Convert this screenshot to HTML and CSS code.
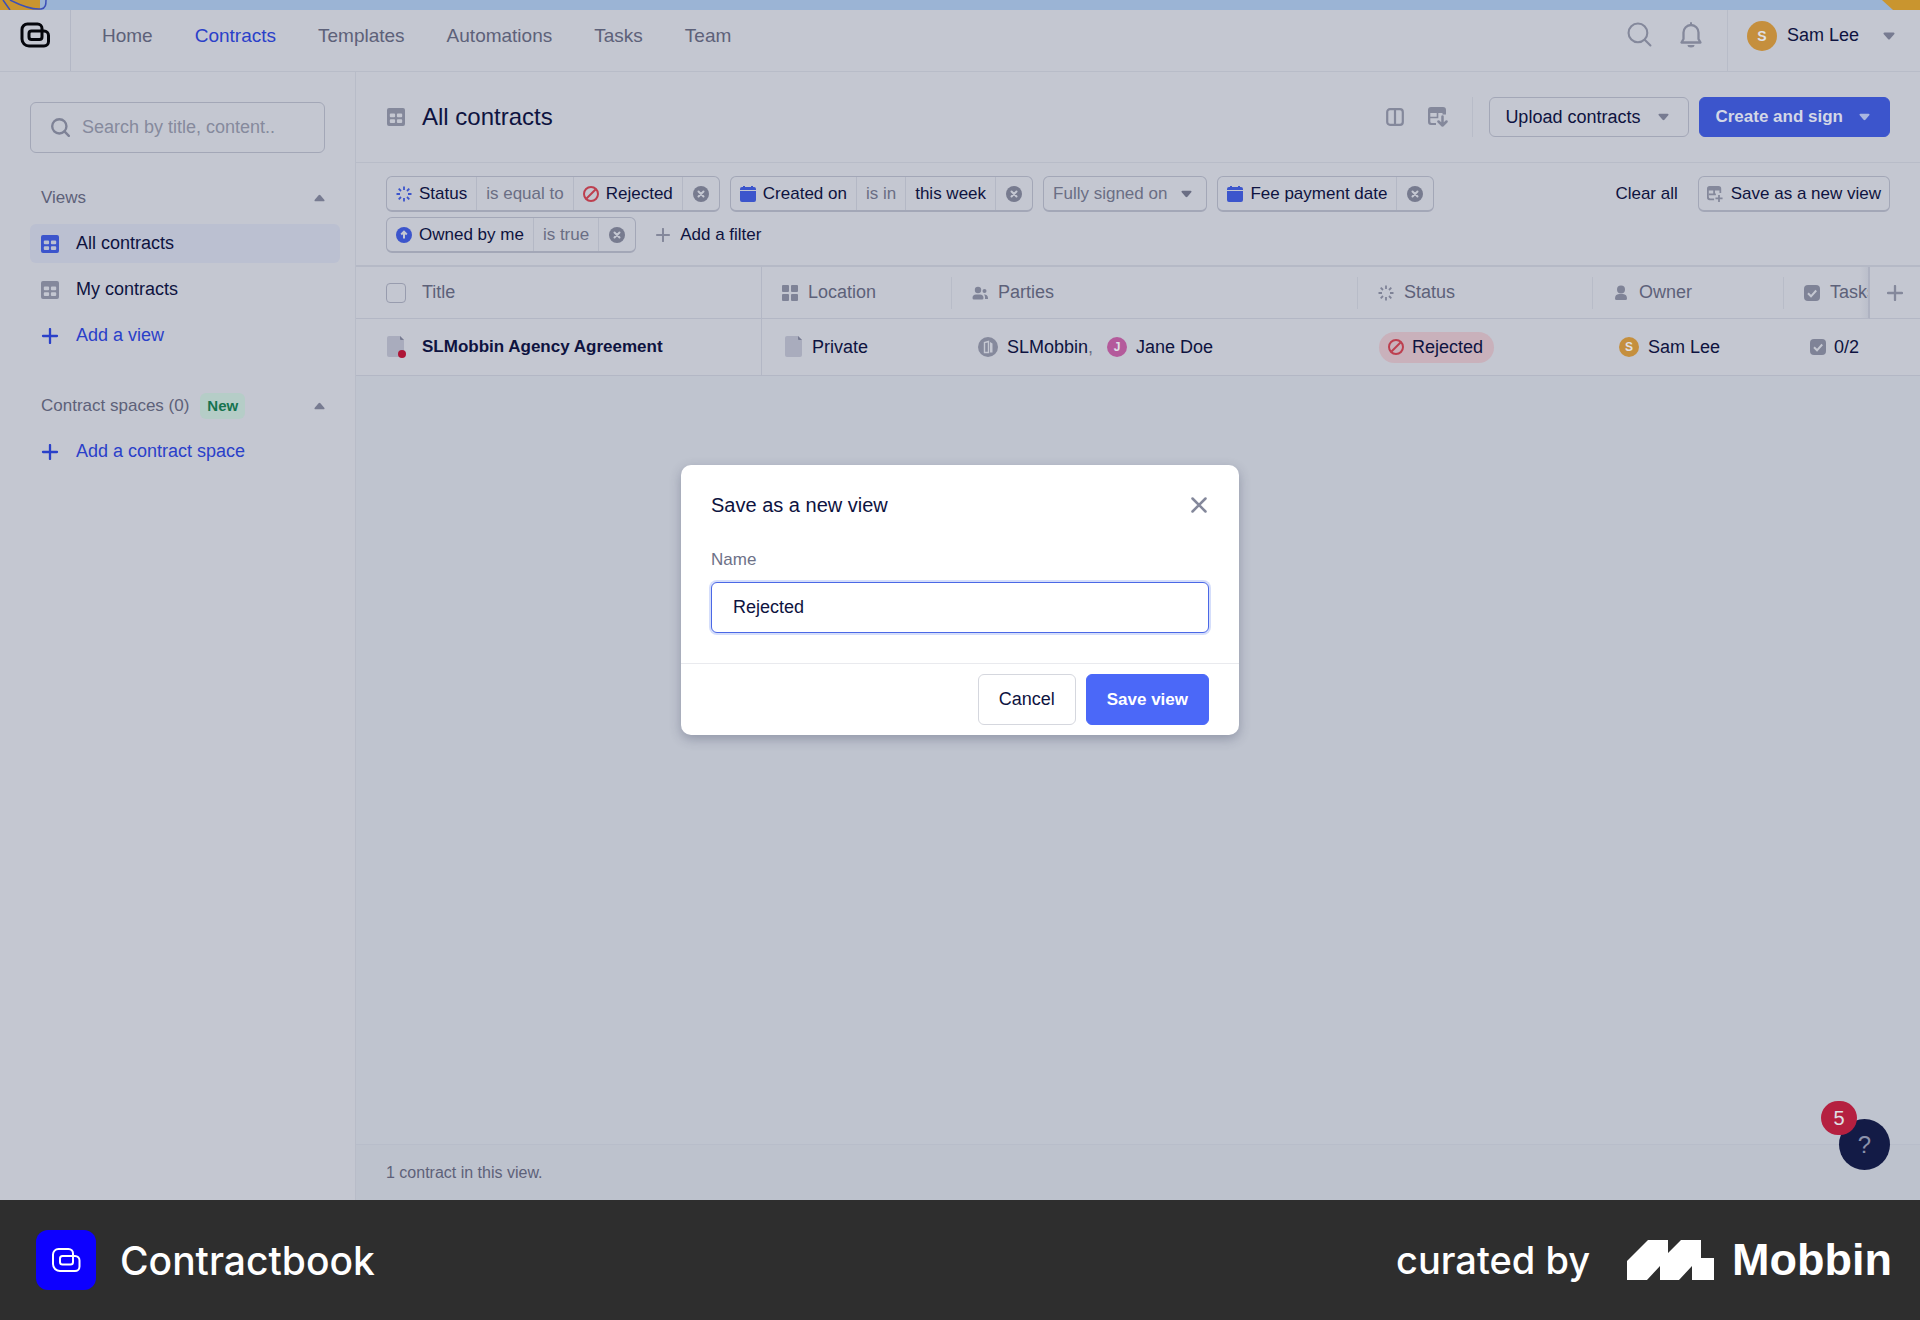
FILE: index.html
```
<!DOCTYPE html>
<html lang="en">
<head>
    <meta charset="UTF-8">
    <meta name="viewport" content="width=device-width, initial-scale=1.0">
    <title>All contracts - Contractbook</title>
    <link rel="stylesheet" href="styles.css">
</head>
<body>
    <!-- icon set -->
    <svg class="sprite" aria-hidden="true">
        <symbol id="logo" viewBox="0 0 30 26">
            <path d="M7.500 2h10A4.500 4.500 0 0 1 22 6.500V15a2.500 2.500 0 0 1-2.500 2.500h-8A2.500 2.500 0 0 1 9 15v-3.500A2.500 2.500 0 0 1 11.500 9H24a4.500 4.500 0 0 1 4.500 4.500v6A4.500 4.500 0 0 1 24 24H9a7 7 0 0 1-7-7V7.500A5.500 5.500 0 0 1 7.500 2z" fill="none"/>
        </symbol>
        <symbol id="search" viewBox="0 0 24 24">
            <g fill="none" stroke="currentColor">
                <circle cx="10.500" cy="10.500" r="9"/>
                <path d="M17 17l5.500 5.500" stroke-linecap="round"/>
            </g>
        </symbol>
        <symbol id="bell" viewBox="0 0 22 26">
            <path d="M1.500 20.500h19L18.500 17v-6.500a7.500 7.500 0 0 0-15 0V17z" fill="none" stroke="currentColor" stroke-width="2.300" stroke-linejoin="round"/>
            <path d="M11 1v2" stroke="currentColor" stroke-width="2" stroke-linecap="round"/>
            <path d="M7.500 23h7a3.500 2.500 0 0 1-7 0z" fill="currentColor"/>
        </symbol>
        <symbol id="down" viewBox="0 0 12 8">
            <path d="M1.500 .500h9a1 1 0 0 1 .7 1.700L7 7a1.400 1.400 0 0 1-2 0L.8 2.200A1 1 0 0 1 1.500 .500z" fill="currentColor"/>
        </symbol>
        <symbol id="up" viewBox="0 0 12 8">
            <path d="M1.500 7.500h9a1 1 0 0 0 .7-1.700L7 1a1.400 1.400 0 0 0-2 0L.8 5.800A1 1 0 0 0 1.500 7.500z" fill="currentColor"/>
        </symbol>
        <symbol id="grid" viewBox="0 0 18 18">
            <path fill-rule="evenodd" fill="currentColor" d="M2 0h14a2 2 0 0 1 2 2v14a2 2 0 0 1-2 2H2a2 2 0 0 1-2-2V2a2 2 0 0 1 2-2zM3.800 5.500a1 1 0 0 0-1 1v1.800a1 1 0 0 0 1 1h3.300a1 1 0 0 0 1-1V6.500a1 1 0 0 0-1-1zM10.900 5.500a1 1 0 0 0-1 1v1.800a1 1 0 0 0 1 1h3.300a1 1 0 0 0 1-1V6.500a1 1 0 0 0-1-1zM3.800 11.200a1 1 0 0 0-1 1V14a1 1 0 0 0 1 1h3.300a1 1 0 0 0 1-1v-1.800a1 1 0 0 0-1-1zM10.900 11.200a1 1 0 0 0-1 1V14a1 1 0 0 0 1 1h3.300a1 1 0 0 0 1-1v-1.800a1 1 0 0 0-1-1z"/>
        </symbol>
        <symbol id="plus" viewBox="0 0 16 16">
            <path d="M8 1v14M1 8h14" stroke="currentColor" stroke-width="2.300" stroke-linecap="round"/>
        </symbol>
        <symbol id="columns" viewBox="0 0 18 18">
            <path d="M4 1.200h10a2.800 2.800 0 0 1 2.800 2.800v10a2.800 2.800 0 0 1-2.800 2.800H4A2.800 2.800 0 0 1 1.200 14V4A2.800 2.800 0 0 1 4 1.200zM9 1v16" fill="none" stroke="currentColor" stroke-width="2.200"/>
        </symbol>
        <symbol id="grid-down" viewBox="0 0 20 20">
            <path d="M3 0h12a3 3 0 0 1 3 3v4.500h-3.500V6H2.300v8.500A1.500 1.500 0 0 0 3.800 16H8v2H3a3 3 0 0 1-3-3V3a3 3 0 0 1 3-3z" fill="currentColor"/>
            <path d="M9.500 5v5.500H2" fill="none" stroke="currentColor" stroke-width="1.600"/>
            <path d="M14.500 9.500v9M10.500 14.500l4 4 4-4" fill="none" stroke="currentColor" stroke-width="2.500" stroke-linecap="round" stroke-linejoin="round"/>
        </symbol>
        <symbol id="grid-plus" viewBox="0 0 18 18">
            <path d="M3 0h10a3 3 0 0 1 3 3v5h-2V5H2v7.500A1.500 1.500 0 0 0 3.500 14H8v2H3a3 3 0 0 1-3-3V3a3 3 0 0 1 3-3z" fill="currentColor"/>
            <path d="M8 4v6M2 9.500h8M13.500 10v8M9.500 14h8" fill="none" stroke="currentColor" stroke-width="2"/>
        </symbol>
        <symbol id="spinner" viewBox="0 0 16 16">
            <path d="M8 .500v3.500M8 12v3.500M.500 8H4M12 8h3.500M2.700 2.700l2.300 2.300M11 11l2.300 2.300M13.300 2.700L11 5M5 11l-2.300 2.300" stroke="currentColor" stroke-width="1.800"/>
        </symbol>
        <symbol id="ban" viewBox="0 0 16 16">
            <circle cx="8" cy="8" r="7" fill="none" stroke="currentColor" stroke-width="2"/>
            <path d="M3.500 12.500l9-9" stroke="currentColor" stroke-width="2"/>
        </symbol>
        <symbol id="clear" viewBox="0 0 16 16">
            <circle cx="8" cy="8" r="8" fill="currentColor"/>
            <path d="M5.500 5.500l5 5M10.500 5.500l-5 5" stroke="#c5c8d2" stroke-width="2" stroke-linecap="round"/>
        </symbol>
        <symbol id="calendar" viewBox="0 0 16 16">
            <path d="M3 0h2v1h6V0h2v1h1a2 2 0 0 1 2 2v1H0V3a2 2 0 0 1 2-2h1zM0 5h16v9a2 2 0 0 1-2 2H2a2 2 0 0 1-2-2z" fill="currentColor"/>
        </symbol>
        <symbol id="owned" viewBox="0 0 16 16">
            <circle cx="8" cy="8" r="8" fill="currentColor"/>
            <path d="M8 11.500V5M5.200 7.500L8 4.700l2.800 2.800" fill="none" stroke="#c5c8d2" stroke-width="2"/>
        </symbol>
        <symbol id="tiles" viewBox="0 0 16 16">
            <path d="M1 0h5a1 1 0 0 1 1 1v5a1 1 0 0 1-1 1H1a1 1 0 0 1-1-1V1a1 1 0 0 1 1-1zM10 0h5a1 1 0 0 1 1 1v5a1 1 0 0 1-1 1h-5a1 1 0 0 1-1-1V1a1 1 0 0 1 1-1zM1 9h5a1 1 0 0 1 1 1v5a1 1 0 0 1-1 1H1a1 1 0 0 1-1-1v-5a1 1 0 0 1 1-1zM10 9h5a1 1 0 0 1 1 1v5a1 1 0 0 1-1 1h-5a1 1 0 0 1-1-1v-5a1 1 0 0 1 1-1z" fill="currentColor"/>
        </symbol>
        <symbol id="people" viewBox="0 0 16 16">
            <g fill="currentColor">
                <circle cx="6" cy="5" r="3.200"/>
                <path d="M2 14.500a1.500 1.500 0 0 1-1.500-1.500A3.500 3.500 0 0 1 4 9.500h4a3.500 3.500 0 0 1 3.500 3.500 1.500 1.500 0 0 1-1.500 1.500z"/>
                <circle cx="12.500" cy="6" r="2"/>
                <path d="M12 9.500a3.500 3.500 0 0 1 4 3.500v1h-3v-1.500a4 4 0 0 0-1-3z"/>
            </g>
        </symbol>
        <symbol id="person" viewBox="0 0 16 16">
            <g fill="currentColor">
                <circle cx="8" cy="4.500" r="4"/>
                <path d="M3.500 15A1.500 1.500 0 0 1 2 13.500 4.500 4.500 0 0 1 6 9h4a4.500 4.500 0 0 1 4 4.500 1.500 1.500 0 0 1-1.500 1.500z"/>
            </g>
        </symbol>
        <symbol id="check" viewBox="0 0 16 16">
            <rect width="16" height="16" rx="4" fill="currentColor"/>
            <path d="M4 8.300l3 3 5.200-5.800" fill="none" stroke="#c5c8d2" stroke-width="2"/>
        </symbol>
        <symbol id="file" viewBox="0 0 18 22">
            <path d="M2 0h11l4 4v15a2 2 0 0 1-2 2H2a2 2 0 0 1-2-2V2a2 2 0 0 1 2-2z" fill="#a9acbd"/>
            <path d="M13 0l4 4h-3a1 1 0 0 1-1-1z" fill="#777b91"/>
        </symbol>
        <symbol id="company" viewBox="0 0 20 20">
            <circle cx="10" cy="10" r="10" fill="#85899c"/>
            <path d="M6.500 15.500V5.500L10.500 4.500v11z" fill="none" stroke="#c5c8d2" stroke-width="1.400"/>
            <path d="M12 5l2.500 1.500v9H12z" fill="#c5c8d2"/>
        </symbol>
        <symbol id="close" viewBox="0 0 16 16">
            <path d="M1.500 1.500l13 13M14.500 1.500l-13 13" stroke="currentColor" stroke-width="2.500" stroke-linecap="round"/>
        </symbol>
    </svg>

    <div class="app">
        <div class="banner">
            <svg width="48" height="10" viewBox="0 0 48 10">
                <path d="M0 0h40v10H0z" fill="#c9952f"/>
                <path d="M3 0l7 10M10 0c10 5 22 10 31 9 5-1 5-5 5-9" fill="none" stroke="#3c50b8" stroke-width="1.500"/>
            </svg>
            <svg width="38" height="10" viewBox="0 0 38 10">
                <path d="M0 0h38v10H11z" fill="#c9952f"/>
            </svg>
        </div>

        <header class="topbar">
            <a class="brand" href="#" aria-label="Contractbook">
                <svg width="30" height="26"><use href="#logo"/></svg>
            </a>
            <nav class="nav">
                <a href="#">Home</a>
                <a href="#" class="active">Contracts</a>
                <a href="#">Templates</a>
                <a href="#">Automations</a>
                <a href="#">Tasks</a>
                <a href="#">Team</a>
            </nav>
            <div class="tools">
                <button class="icon-btn" aria-label="Search"><svg width="25" height="25"><use href="#search"/></svg></button>
                <button class="icon-btn" aria-label="Notifications"><svg width="22" height="26"><use href="#bell"/></svg></button>
            </div>
            <button class="account">
                <span class="avatar large">S</span>
                <span class="account-name">Sam Lee</span>
                <svg width="12" height="8"><use href="#down"/></svg>
            </button>
        </header>

        <div class="layout">
            <aside class="sidebar">
                <div class="search">
                    <svg width="19" height="19"><use href="#search"/></svg>
                    <input type="text" placeholder="Search by title, content.." aria-label="Search contracts">
                </div>

                <section class="group">
                    <h2 class="group-title">Views <svg width="11" height="8"><use href="#up"/></svg></h2>
                    <a href="#" class="side-link current"><svg width="18" height="18"><use href="#grid"/></svg>All contracts</a>
                    <a href="#" class="side-link"><svg width="18" height="18"><use href="#grid"/></svg>My contracts</a>
                    <a href="#" class="side-link add"><svg width="16" height="16"><use href="#plus"/></svg>Add a view</a>
                </section>

                <section class="group">
                    <h2 class="group-title">Contract spaces (0) <span class="new">New</span> <svg width="11" height="8"><use href="#up"/></svg></h2>
                    <a href="#" class="side-link add"><svg width="16" height="16"><use href="#plus"/></svg>Add a contract space</a>
                </section>
            </aside>

            <main class="main">
                <div class="page-head">
                    <svg class="muted-icon" width="18" height="18"><use href="#grid"/></svg>
                    <h1>All contracts</h1>
                    <button class="icon-btn" aria-label="Columns"><svg width="18" height="18"><use href="#columns"/></svg></button>
                    <button class="icon-btn" aria-label="Export"><svg width="20" height="20"><use href="#grid-down"/></svg></button>
                    <div class="head-actions">
                        <button class="btn">Upload contracts <svg width="11" height="8"><use href="#down"/></svg></button>
                        <button class="btn primary">Create and sign <svg width="11" height="8"><use href="#down"/></svg></button>
                    </div>
                </div>

                <div class="filters">
                    <div class="chips">
                        <div class="chip">
                            <span class="blue"><svg width="16" height="16"><use href="#spinner"/></svg><b>Status</b></span>
                            <span>is equal to</span>
                            <span class="red"><svg width="16" height="16"><use href="#ban"/></svg><b>Rejected</b></span>
                            <button aria-label="Remove"><svg width="16" height="16"><use href="#clear"/></svg></button>
                        </div>
                        <div class="chip">
                            <span class="blue"><svg width="16" height="16"><use href="#calendar"/></svg><b>Created on</b></span>
                            <span>is in</span>
                            <span><b>this week</b></span>
                            <button aria-label="Remove"><svg width="16" height="16"><use href="#clear"/></svg></button>
                        </div>
                        <button class="chip picker">Fully signed on <svg width="11" height="8"><use href="#down"/></svg></button>
                        <div class="chip">
                            <span class="blue"><svg width="16" height="16"><use href="#calendar"/></svg><b>Fee payment date</b></span>
                            <button aria-label="Remove"><svg width="16" height="16"><use href="#clear"/></svg></button>
                        </div>
                        <div class="chip">
                            <span class="blue"><svg width="16" height="16"><use href="#owned"/></svg><b>Owned by me</b></span>
                            <span>is true</span>
                            <button aria-label="Remove"><svg width="16" height="16"><use href="#clear"/></svg></button>
                        </div>
                        <button class="add-filter"><svg width="14" height="14"><use href="#plus"/></svg>Add a filter</button>
                    </div>
                    <div class="filter-actions">
                        <button class="clear-all">Clear all</button>
                        <button class="chip save-view"><svg width="16" height="16"><use href="#grid-plus"/></svg>Save as a new view</button>
                    </div>
                </div>

                <table class="contracts">
                    <colgroup>
                        <col>
                        <col class="w-location">
                        <col class="w-parties">
                        <col class="w-status">
                        <col class="w-owner">
                        <col class="w-tasks">
                        <col class="w-more">
                    </colgroup>
                    <thead>
                        <tr>
                            <th><div class="cell first"><input type="checkbox" aria-label="Select all">Title</div></th>
                            <th><div class="cell line"><svg width="16" height="16"><use href="#tiles"/></svg>Location</div></th>
                            <th><div class="cell line"><svg width="16" height="16"><use href="#people"/></svg>Parties</div></th>
                            <th><div class="cell line"><svg width="16" height="16"><use href="#spinner"/></svg>Status</div></th>
                            <th><div class="cell line"><svg width="16" height="16"><use href="#person"/></svg>Owner</div></th>
                            <th class="tasks"><div class="cell"><svg width="16" height="16"><use href="#check"/></svg>Tasks</div></th>
                            <th class="more"><button class="icon-btn" aria-label="Add column"><svg width="16" height="16"><use href="#plus"/></svg></button></th>
                        </tr>
                    </thead>
                    <tbody>
                        <tr>
                            <td><div class="cell first"><span class="doc"><svg width="18" height="22"><use href="#file"/></svg></span><strong>SLMobbin Agency Agreement</strong></div></td>
                            <td><div class="cell place"><svg width="18" height="22"><use href="#file"/></svg>Private</div></td>
                            <td><div class="cell"><svg width="20" height="20"><use href="#company"/></svg><span>SLMobbin<i>,</i></span><span class="avatar pink">J</span>Jane Doe</div></td>
                            <td><div class="cell status"><span class="pill"><svg width="16" height="16"><use href="#ban"/></svg>Rejected</span></div></td>
                            <td><div class="cell"><span class="avatar">S</span>Sam Lee</div></td>
                            <td colspan="2"><div class="cell count"><svg width="16" height="16"><use href="#check"/></svg>0/2</div></td>
                        </tr>
                    </tbody>
                </table>

                <div class="summary">1 contract in this view.</div>
            </main>
        </div>

        <button class="help" aria-label="Help">?<span class="badge">5</span></button>

        <div class="overlay">
            <form class="modal">
                <div class="modal-body">
                    <div class="modal-head">
                        <h2>Save as a new view</h2>
                        <button type="button" class="icon-btn" aria-label="Close"><svg width="16" height="16"><use href="#close"/></svg></button>
                    </div>
                    <label for="view-name">Name</label>
                    <input type="text" id="view-name" value="Rejected">
                </div>
                <div class="modal-foot">
                    <button type="button" class="modal-btn">Cancel</button>
                    <button type="button" class="modal-btn save">Save view</button>
                </div>
            </form>
        </div>
    </div>

    <footer class="credits">
        <span class="tile"><svg width="30" height="26"><use href="#logo"/></svg></span>
        <span class="product">Contractbook</span>
        <span class="curated">curated by</span>
        <svg width="87" height="40" viewBox="0 0 87 40">
            <path d="M0 40V21L21 0h20v13L54 0h20v18h13v22H65V26L52 40H33V26L20 40z" fill="#fff"/>
        </svg>
        <span class="mobbin">Mobbin</span>
    </footer>
</body>
</html>
```
FILE: styles.css
```
* {
    box-sizing: border-box;
}
body {
    margin: 0;
    min-height: 100vh;
    display: flex;
    flex-direction: column;
    font-family: "Liberation Sans", Arial, sans-serif;
    font-size: 18px;
    color: #0e1340;
    background: #2e2e2e;
}
button, input {
    font: inherit;
    color: inherit;
}
button {
    padding: 0;
    border: none;
    background: none;
    cursor: pointer;
    white-space: nowrap;
}
a {
    color: inherit;
    text-decoration: none;
}
h1, h2 {
    margin: 0;
    font-weight: 400;
}
svg {
    display: block;
    flex: none;
}
.sprite {
    position: absolute;
    width: 0;
    height: 0;
}
.app {
    position: relative;
    flex: 1;
    display: flex;
    flex-direction: column;
    background: #c4c7d1;
}
.icon-btn {
    display: flex;
    color: #84889b;
}

/* top */
.banner {
    height: 10px;
    display: flex;
    justify-content: space-between;
    background: #9bb4d5;
}
.topbar {
    height: 62px;
    display: flex;
    border-bottom: 1px solid #b8bcc8;
}
.brand {
    width: 71px;
    padding: 12px 0 0 20px;
    border-right: 1px solid #b3b7c5;
}
.brand svg {
    stroke: #05060c;
    stroke-width: 3;
}
.nav {
    flex: 1;
    display: flex;
    gap: 42px;
    padding-left: 31px;
    font-size: 19px;
    line-height: 52px;
    color: #5d6179;
}
.nav .active {
    color: #2a40c9;
}
.tools {
    display: flex;
    gap: 28px;
    padding: 12px 25px 0 0;
    stroke-width: 2;
}
.account {
    display: flex;
    align-items: center;
    padding: 0 25px 10px 19px;
    border-left: 1px solid #b8bcc8;
    color: #777b91;
}
.account-name {
    margin: 0 24px 0 10px;
    color: #0e1340;
}
.avatar {
    width: 20px;
    height: 20px;
    border-radius: 50%;
    background: #c58f3d;
    color: #dfe0e6;
    font-size: 12px;
    font-weight: 700;
    line-height: 20px;
    text-align: center;
}
.avatar.large {
    width: 30px;
    height: 30px;
    font-size: 14px;
    line-height: 30px;
}
.avatar.pink {
    margin-left: 5px;
    background: #b45a9b;
}

.layout {
    flex: 1;
    display: flex;
}

/* sidebar */
.sidebar {
    width: 356px;
    padding: 30px 15px 0 30px;
    border-right: 1px solid #b8bcc8;
}
.search {
    display: flex;
    align-items: center;
    gap: 12px;
    height: 51px;
    margin-right: 15px;
    padding: 0 20px;
    border: 1px solid #a3a7b7;
    border-radius: 6px;
    color: #7e8296;
    stroke-width: 3;
}
.search input {
    flex: 1;
    min-width: 0;
    padding: 0;
    border: none;
    outline: none;
    background: none;
}
.search input::placeholder {
    color: #868a9d;
    opacity: 1;
}
.group {
    display: flex;
    flex-direction: column;
    gap: 7px;
    margin-top: 25px;
}
.group + .group {
    margin-top: 31px;
}
.group-title {
    display: flex;
    align-items: center;
    height: 39px;
    padding: 0 15px 0 11px;
    font-size: 17px;
    color: #5d6179;
}
.group-title svg {
    margin-left: auto;
    color: #777b91;
}
.new {
    margin-left: 11px;
    padding: 0 7px;
    border-radius: 6px;
    background: #b5cdc7;
    color: #16734f;
    font-size: 15px;
    font-weight: 700;
    line-height: 26px;
}
.side-link {
    display: flex;
    align-items: center;
    gap: 17px;
    height: 39px;
    padding-left: 11px;
    border-radius: 6px;
}
.side-link svg {
    width: 18px;
    color: #84889b;
}
.side-link.current {
    background: #bbc0d1;
}
.side-link.current svg {
    color: #3c55cc;
}
.side-link.add, .side-link.add svg {
    color: #2a40c9;
}

/* page */
.main {
    flex: 1;
    min-width: 0;
    display: flex;
    flex-direction: column;
    background: #bfc4cf;
}
.page-head {
    display: flex;
    align-items: center;
    gap: 24px;
    height: 91px;
    padding-right: 30px;
    padding-left: 31px;
    border-bottom: 1px solid #b8bcc8;
    background: #c4c7d1;
}
.page-head h1 {
    flex: 1;
    margin-left: -7px;
    font-size: 24px;
}
.muted-icon {
    color: #84889b;
}
.head-actions {
    display: flex;
    gap: 10px;
    padding-left: 16px;
    border-left: 1px solid #b8bcc8;
}
.btn {
    display: flex;
    align-items: center;
    gap: 18px;
    height: 40px;
    padding: 0 19px 0 15px;
    border: 1px solid #a3a7b7;
    border-radius: 6px;
}
.btn svg {
    color: #777b91;
}
.btn.primary {
    gap: 16px;
    border-color: #3c55cc;
    background: #3c55cc;
    color: #d3d7e6;
    font-size: 17px;
    font-weight: 700;
}
.btn.primary svg {
    color: #a9b6e0;
}
.filters {
    display: flex;
    gap: 20px;
    padding: 13px 30px 12px;
    border-bottom: 2px solid #b5b9c6;
    background: #c4c7d1;
    font-size: 17px;
}
.chips {
    flex: 1;
    display: flex;
    flex-wrap: wrap;
    gap: 5px 10px;
}
.chip {
    display: flex;
    height: 36px;
    border: 1px solid #a3a7b7;
    border-bottom-width: 2px;
    border-radius: 6px;
    color: #6a6e84;
}
.chip span, .chip button {
    display: flex;
    align-items: center;
    gap: 7px;
    padding: 0 9px;
    border-left: 1px solid #b4b8c5;
}
.chip > :first-child {
    border-left: none;
}
.chip b {
    font-weight: 400;
    color: #0e1340;
}
.chip button {
    padding: 0 10px;
    color: #777b8f;
}
.chip .blue {
    color: #3c55cc;
}
.red svg {
    color: #bd3f4f;
}
.picker {
    align-items: center;
    gap: 14px;
    padding: 0 14px 0 9px;
}
.add-filter {
    display: flex;
    align-items: center;
    gap: 10px;
    padding: 0 10px;
}
.add-filter svg {
    color: #84889b;
}
.filter-actions {
    display: flex;
    align-items: flex-start;
    gap: 20px;
}
.clear-all {
    height: 36px;
}
.save-view {
    align-items: center;
    gap: 8px;
    padding: 0 8px;
    color: #0e1340;
}
.save-view svg {
    color: #84889b;
}

/* table */
.contracts {
    width: 100%;
    table-layout: fixed;
    border-collapse: separate;
    border-spacing: 0;
    background: #c4c7d1;
}
.w-location { width: 190px; }
.w-parties { width: 406px; }
.w-status { width: 235px; }
.w-owner { width: 191px; }
.w-tasks { width: 86px; }
.w-more { width: 50px; }
th, td {
    padding: 0;
    border-bottom: 1px solid #b3b7c5;
    font-weight: 400;
    text-align: left;
    white-space: nowrap;
}
th {
    height: 52px;
    color: #5d6179;
}
td {
    height: 57px;
}
th:first-child, td:first-child {
    border-right: 1px solid #b3b7c5;
}
.cell {
    display: flex;
    align-items: center;
    gap: 10px;
    height: 32px;
    padding-left: 20px;
}
th .cell svg {
    color: #7f8397;
}
td .cell {
    gap: 9px;
    padding-left: 26px;
}
td .cell.first, th .cell.first {
    gap: 17px;
    padding-left: 31px;
}
.cell.line {
    border-right: 1px solid #b8bcc8;
}
td .cell.place {
    padding-left: 23px;
}
td .cell.status {
    padding-left: 21px;
}
.cell input {
    appearance: none;
    width: 20px;
    height: 20px;
    margin: 0 -1px 0 -1px;
    border: 1px solid #989cae;
    border-radius: 4px;
}
.cell i {
    font-style: normal;
    color: #6a6e84;
}
.cell strong {
    font-size: 17px;
}
td .cell.count {
    gap: 8px;
}
.cell.count svg {
    color: #7f8397;
}
.doc {
    position: relative;
}
.doc::after {
    content: "";
    position: absolute;
    right: -1px;
    bottom: 0;
    width: 8px;
    height: 8px;
    border-radius: 50%;
    background: #ae1637;
}
.pill {
    display: flex;
    align-items: center;
    gap: 8px;
    height: 31px;
    padding: 0 11px 0 9px;
    border-radius: 16px;
    background: #c9b1bb;
}
.pill svg {
    color: #bd3f4f;
}
.tasks {
    overflow: hidden;
    border-right: 2px solid #aeb2c1;
    background: linear-gradient(to left, #bbbfcb, #c4c7d1 8px);
}
.more .icon-btn {
    margin: auto;
}
.summary {
    margin-top: auto;
    height: 56px;
    padding-left: 30px;
    border-top: 1px solid #b8bdca;
    background: #bdc2cd;
    color: #5d6179;
    font-size: 16px;
    line-height: 56px;
}

.help {
    position: absolute;
    right: 30px;
    bottom: 30px;
    width: 51px;
    height: 51px;
    border-radius: 50%;
    background: #131b46;
    color: #8c92ab;
    font-size: 24px;
}
.badge {
    position: absolute;
    left: -18px;
    top: -18px;
    width: 36px;
    height: 34px;
    border-radius: 17px;
    background: #b52040;
    color: #dfe0e6;
    font-size: 20px;
    line-height: 34px;
}

/* dialog */
.overlay {
    position: absolute;
    inset: 0;
    display: flex;
    align-items: center;
    justify-content: center;
}
.modal {
    width: 558px;
    border-radius: 10px;
    background: #fff;
    box-shadow: 0 4px 12px rgba(40, 45, 80, 0.3);
}
.modal-body {
    display: flex;
    flex-direction: column;
    padding: 29px 30px 30px;
}
.modal-head {
    display: flex;
    align-items: center;
    justify-content: space-between;
    margin-bottom: 34px;
    padding-right: 2px;
}
.modal-head h2 {
    font-size: 20px;
    line-height: 22px;
}
.modal label {
    margin-bottom: 12px;
    color: #6d7187;
    font-size: 17px;
    line-height: 20px;
}
.modal input {
    height: 51px;
    padding: 0 21px;
    border: 1px solid #4b68e6;
    border-radius: 6px;
    outline: none;
    box-shadow: 0 0 0 2px #d5defb;
}
.modal-foot {
    display: flex;
    justify-content: flex-end;
    gap: 10px;
    padding: 10px 30px;
    border-top: 1px solid #e9eaee;
}
.modal-btn {
    height: 51px;
    padding: 0 20px;
    border: 1px solid #d5d7de;
    border-radius: 6px;
}
.modal-btn.save {
    border-color: #4b68f8;
    background: #4b68f8;
    color: #fff;
    font-size: 17px;
    font-weight: 700;
}

/* bottom strip */
.credits {
    display: flex;
    align-items: center;
    height: 120px;
    padding: 0 28px 0 36px;
    color: #fff;
    font-family: Inter, "Liberation Sans", sans-serif;
    font-size: 38px;
    font-weight: 500;
}
.tile {
    display: flex;
    align-items: center;
    justify-content: center;
    width: 60px;
    height: 60px;
    border-radius: 12px;
    background: #0d00ff;
    stroke: #fff;
    stroke-width: 2;
}
.product {
    flex: 1;
    margin-left: 24px;
    font-size: 39px;
}
.curated {
    margin-right: 37px;
}
.mobbin {
    margin-left: 18px;
    font-family: "Liberation Sans", sans-serif;
    font-size: 45px;
    font-weight: 700;
}
```
